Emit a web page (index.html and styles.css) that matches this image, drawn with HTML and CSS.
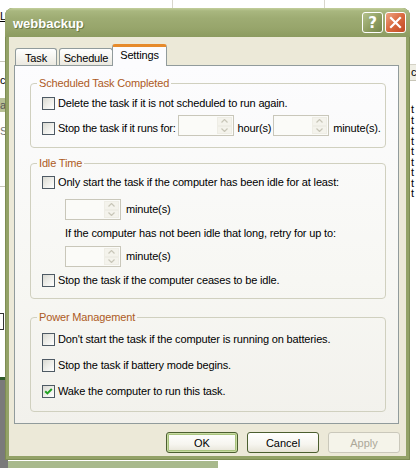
FILE: index.html
```html
<!DOCTYPE html>
<html>
<head>
<meta charset="utf-8">
<title>webbackup</title>
<link rel="stylesheet" href="styles.css">
</head>
<body>
<div class="desktop">
  <div class="bg-top">
    <span class="bg-sep sep1"></span>
    <span class="bg-sep sep2"></span>
  </div>
  <div class="bg-left">
    <span class="bg-l">L</span>
    <span class="bg-hline h1"></span>
    <span class="bg-cl">cl</span>
    <span class="bg-a">a</span>
    <span class="bg-s">S</span>
    <span class="bg-hline h2"></span>
    <span class="bg-box"></span>
    <span class="bg-dark"></span>
  </div>
  <div class="bg-right">
    <span class="bg-head">c</span>
    <div class="bg-lines">
      <span>t</span><span>t</span><span>t</span><span>t</span><span>t</span><span>t</span><span>t</span><span>t</span><span>t</span>
    </div>
  </div>
  <div class="bg-task"></div>

  <div class="dialog">
    <div class="titlebar">
      <span class="title">webbackup</span>
      <div class="caption-btns">
        <span class="cap-btn help">?</span>
        <span class="cap-btn close">
          <svg width="13" height="13" viewBox="0 0 13 13"><path d="M2 2 L11 11 M11 2 L2 11" stroke="#fff" stroke-width="2.2" stroke-linecap="square" fill="none"/></svg>
        </span>
      </div>
    </div>
    <div class="client">
      <div class="tabs">
        <span class="tab tab-task">Task</span>
        <span class="tab tab-schedule">Schedule</span>
        <span class="tab tab-active">Settings</span>
      </div>
      <div class="panel">
        <fieldset class="group g1">
          <legend>Scheduled Task Completed</legend>
          <div class="row r-h21">
            <span class="cb"></span><span class="lbl">Delete the task if it is not scheduled to run again.</span>
          </div>
          <div class="row r-end r-gap1">
            <span class="cb cb-low"></span><span class="lbl lbl-low w-stop">Stop the task if it runs for:</span>
            <span class="spin"><span class="spin-btns"><span class="sb up"><svg width="7" height="4" viewBox="0 0 7 4"><path d="M0.5 3.5 L3.5 0.5 L6.5 3.5" stroke="#c8c6b8" stroke-width="1.2" fill="none"/></svg></span><span class="sb dn"><svg width="7" height="4" viewBox="0 0 7 4"><path d="M0.5 0.5 L3.5 3.5 L6.5 0.5" stroke="#c8c6b8" stroke-width="1.2" fill="none"/></svg></span></span></span>
            <span class="lbl lbl-low w-hour">hour(s)</span>
            <span class="spin"><span class="spin-btns"><span class="sb up"><svg width="7" height="4" viewBox="0 0 7 4"><path d="M0.5 3.5 L3.5 0.5 L6.5 3.5" stroke="#c8c6b8" stroke-width="1.2" fill="none"/></svg></span><span class="sb dn"><svg width="7" height="4" viewBox="0 0 7 4"><path d="M0.5 0.5 L3.5 3.5 L6.5 0.5" stroke="#c8c6b8" stroke-width="1.2" fill="none"/></svg></span></span></span>
            <span class="lbl lbl-low w-min">minute(s).</span>
          </div>
        </fieldset>

        <fieldset class="group g2">
          <legend>Idle Time</legend>
          <div class="row r-h13">
            <span class="cb"></span><span class="lbl">Only start the task if the computer has been idle for at least:</span>
          </div>
          <div class="row indent r-spin1">
            <span class="spin"><span class="spin-btns"><span class="sb up"><svg width="7" height="4" viewBox="0 0 7 4"><path d="M0.5 3.5 L3.5 0.5 L6.5 3.5" stroke="#c8c6b8" stroke-width="1.2" fill="none"/></svg></span><span class="sb dn"><svg width="7" height="4" viewBox="0 0 7 4"><path d="M0.5 0.5 L3.5 3.5 L6.5 0.5" stroke="#c8c6b8" stroke-width="1.2" fill="none"/></svg></span></span></span>
            <span class="lbl unit2">minute(s)</span>
          </div>
          <div class="row indent r-text">
            <span class="lbl lbl-flush">If the computer has not been idle that long, retry for up to:</span>
          </div>
          <div class="row indent r-spin2">
            <span class="spin"><span class="spin-btns"><span class="sb up"><svg width="7" height="4" viewBox="0 0 7 4"><path d="M0.5 3.5 L3.5 0.5 L6.5 3.5" stroke="#c8c6b8" stroke-width="1.2" fill="none"/></svg></span><span class="sb dn"><svg width="7" height="4" viewBox="0 0 7 4"><path d="M0.5 0.5 L3.5 3.5 L6.5 0.5" stroke="#c8c6b8" stroke-width="1.2" fill="none"/></svg></span></span></span>
            <span class="lbl unit2">minute(s)</span>
          </div>
          <div class="row r-h13 r-last2">
            <span class="cb"></span><span class="lbl">Stop the task if the computer ceases to be idle.</span>
          </div>
        </fieldset>

        <fieldset class="group g3">
          <legend>Power Management</legend>
          <div class="row r-h13">
            <span class="cb"></span><span class="lbl">Don't start the task if the computer is running on batteries.</span>
          </div>
          <div class="row r-h13 r-gap13">
            <span class="cb"></span><span class="lbl">Stop the task if battery mode begins.</span>
          </div>
          <div class="row r-h13 r-gap13">
            <span class="cb checked"><svg width="11" height="11" viewBox="0 0 11 11"><path d="M2.2 5.2 L4.4 7.4 L8.8 3" stroke="#21a121" stroke-width="2" fill="none"/></svg></span><span class="lbl">Wake the computer to run this task.</span>
          </div>
        </fieldset>
      </div>
      <div class="buttons">
        <span class="btn btn-default">OK</span>
        <span class="btn">Cancel</span>
        <span class="btn btn-disabled">Apply</span>
      </div>
    </div>
  </div>
</div>
</body>
</html>
```

FILE: styles.css
```css
html, body {
  margin: 0;
  padding: 0;
}
body {
  width: 416px;
  height: 468px;
  overflow: hidden;
  background: #ffffff;
  font-family: "Liberation Sans", Arial, sans-serif;
  font-size: 11px;
  letter-spacing: -0.15px;
  color: #000;
}
.desktop {
  position: relative;
  width: 416px;
  height: 468px;
  overflow: hidden;
  background: #fff;
}

/* ---------- background window fragments ---------- */
.bg-top {
  position: absolute;
  left: 0; top: 0;
  width: 416px; height: 8px;
}
.bg-sep {
  position: absolute;
  top: 0; width: 1px; height: 8px;
  background: #d8d6cc;
}
.sep1 { left: 172px; }
.sep2 { left: 324px; }

.bg-left {
  position: absolute;
  left: 0; top: 0;
  width: 5px; height: 468px;
}
.bg-left span { position: absolute; left: 0; font-size: 11px; line-height: 11px; }
.bg-l { top: 11px; text-decoration: underline; }
.bg-hline { width: 5px; height: 1px; background: #c9c7bb; }
.h1 { top: 61px; }
.h2 { top: 186px; }
.bg-cl { top: 75px; }
.bg-a { top: 98px; width: 5px; height: 14px; background: #b7c095; color: #555; line-height: 14px !important; }
.bg-s { top: 126px; color: #777; }
.bg-box { top: 313px; width: 3px; height: 15px; border: 1px solid #333; border-left: none; }
.bg-dark { top: 377px; width: 8px; height: 91px; background: #7a7a7a; border-top: 3px solid #2f5a2a; }

.bg-right {
  position: absolute;
  left: 410px; top: 0;
  width: 6px; height: 468px;
}
.bg-head {
  position: absolute;
  left: 0; top: 64px;
  width: 6px; height: 15px;
  background: #efeee4;
  border-top: 1px solid #d4d2c6;
  border-bottom: 1px solid #c8c6b8;
  line-height: 15px;
  padding-left: 1px;
}
.bg-lines {
  position: absolute;
  left: 1px; top: 104px;
  display: flex;
  flex-direction: column;
  line-height: 10.5px;
}

.bg-task {
  position: absolute;
  left: 8px; top: 461px;
  width: 210px; height: 7px;
  background: #a8b98c;
}

/* ---------- dialog ---------- */
.dialog {
  position: absolute;
  left: 5px; top: 8px;
  width: 405px; height: 452px;
  box-sizing: border-box;
  display: flex;
  flex-direction: column;
  background: #93a267;
  border-radius: 8px 8px 0 0;
  box-shadow: inset 1px 0 0 #7d8c53, inset -1px 0 0 #7d8c53, inset 0 -1px 0 #7d8c53;
}
.titlebar {
  height: 29px;
  flex: none;
  display: flex;
  align-items: center;
  padding-left: 8px;
  border-radius: 8px 8px 0 0;
  background: linear-gradient(to bottom, #c3cf9c 0%, #a9b77f 10%, #9eac73 35%, #97a56b 70%, #8c9b60 100%);
}
.title {
  color: #fff;
  font-weight: bold;
  font-size: 13px;
  letter-spacing: 0;
  text-shadow: 1px 1px 0 #6b7a45;
  margin-top: 1px;
}
.caption-btns {
  margin-left: auto;
  margin-right: 4px;
  display: flex;
  gap: 2px;
}
.cap-btn {
  width: 21px; height: 21px;
  box-sizing: border-box;
  border: 1px solid #fff;
  border-radius: 3px;
  display: flex;
  align-items: center;
  justify-content: center;
}
.help {
  background: linear-gradient(135deg, #b4c28d 0%, #8f9e62 55%, #76864a 100%);
  color: #fff;
  font-weight: bold;
  font-size: 15px;
  letter-spacing: 0;
  font-family: "DejaVu Sans", sans-serif;
}
.close {
  background: linear-gradient(135deg, #eea584 0%, #d9693f 50%, #c24a25 100%);
}

.client {
  flex: 1;
  margin: 0 4px 4px;
  background: #ece9d8;
  display: flex;
  flex-direction: column;
}

/* ---------- tabs ---------- */
.tabs {
  display: flex;
  align-items: flex-end;
  height: 21px;
  margin: 7px 0 0 5px;
  padding-left: 1px;
  position: relative;
  z-index: 1;
}
.tab {
  box-sizing: border-box;
  height: 17px;
  border: 1px solid #919b9c;
  border-bottom: none;
  border-radius: 3px 3px 0 0;
  background: linear-gradient(to bottom, #ffffff 0%, #f6f5f0 50%, #ebe9e0 100%);
  display: flex;
  align-items: center;
  justify-content: center;
  padding-top: 1px;
}
.tab-task { width: 42px; }
.tab-schedule { width: 54px; margin-left: 2px; }
.tab-active {
  width: 55px;
  height: 22px;
  margin-bottom: -1px;
  margin-left: -1px;
  background: #fcfcfe;
  border-top: 3px solid #e68b2c;
  padding-top: 0;
  padding-bottom: 3px;
}

/* ---------- panel ---------- */
.panel {
  margin-left: 5px;
  width: 385px;
  height: 359px;
  box-sizing: border-box;
  border: 1px solid #919b9c;
  background: linear-gradient(to bottom, #fcfcfe 0%, #f7f7f3 60%, #f2f1ec 100%);
  padding: 11px 12px 0 15px;
}
.group {
  margin: 0;
  border: 1px solid #d0d0bf;
  border-radius: 4px;
  padding: 0 11px;
  min-width: 0;
}
.group legend {
  color: #ad5a24;
  padding: 0 2px;
  margin-left: -5px;
  line-height: 13px;
  font-size: 11px;
}
.g1 { padding-top: 3px; padding-bottom: 11px; }
.g2 { margin-top: 9px; padding-top: 6px; padding-bottom: 11px; }
.g3 { margin-top: 12px; padding-top: 9px; padding-bottom: 13px; }

.row {
  display: flex;
  align-items: center;
}
.r-h21 { height: 21px; }
.r-h13 { height: 13px; }
.r-end { align-items: flex-end; height: 21px; }
.r-gap1 { margin-top: 1px; }
.r-gap13 { margin-top: 13px; }
.indent { padding-left: 23px; }
.r-spin1 { margin-top: 10px; }
.r-text { margin-top: 7px; height: 13px; }
.r-spin2 { margin-top: 6px; }
.r-last2 { margin-top: 7px; }

.cb {
  width: 13px; height: 13px;
  box-sizing: border-box;
  flex: none;
  border: 1px solid #4e5a64;
  background: linear-gradient(135deg, #d9d9d2 0%, #ecece7 45%, #ffffff 100%);
  display: flex;
  align-items: center;
  justify-content: center;
}
.cb-low { margin-bottom: 1px; }
.lbl {
  margin-left: 3px;
  line-height: 13px;
  white-space: nowrap;
}
.lbl-flush { margin-left: 0; }
.lbl-low { margin-bottom: 1px; }
.w-stop { margin-right: 3px; letter-spacing: -0.25px; }
.w-hour { margin-left: 3px; margin-right: 2px; }
.w-min { margin-left: 4px; }
.unit2 { margin-left: 5px; }

.spin {
  width: 56px; height: 21px;
  box-sizing: border-box;
  flex: none;
  border: 1px solid #c9c7ba;
  background: #fbfbf8;
  display: flex;
  justify-content: flex-end;
  padding: 1px;
}
.spin-btns {
  width: 15px;
  display: flex;
  flex-direction: column;
}
.sb {
  flex: 1;
  box-sizing: border-box;
  border: 1px solid #eeede5;
  background: #f4f3ec;
  display: flex;
  align-items: center;
  justify-content: center;
}
.sb svg { display: block; }

/* ---------- buttons ---------- */
.buttons {
  display: flex;
  justify-content: flex-end;
  gap: 9px;
  margin-top: 8px;
  padding-right: 6px;
}
.btn {
  width: 72px; height: 21px;
  box-sizing: border-box;
  border: 1px solid #4b5e30;
  border-radius: 3px;
  background: linear-gradient(to bottom, #ffffff 0%, #f6f5ef 60%, #e6e3d6 100%);
  display: flex;
  align-items: center;
  justify-content: center;
  letter-spacing: 0;
}
.btn-default {
  box-shadow: inset 0 0 0 1px #c9dca3, inset 0 0 0 2px #a8c27e;
}
.btn-disabled {
  border-color: #cac8bb;
  background: #f5f4ea;
  color: #aca899;
}
```
